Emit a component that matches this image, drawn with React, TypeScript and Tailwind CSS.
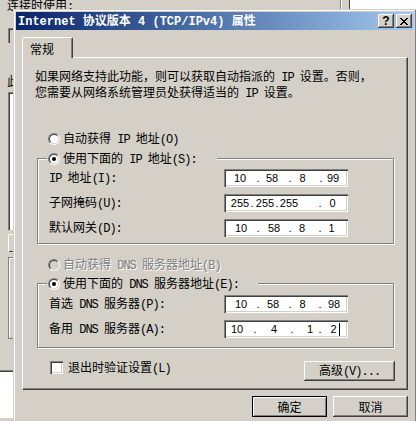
import React from "react";

const LATIN = "font-['Liberation_Mono',monospace] tracking-[-1px]";
const LATIN_BOLD = "font-['Liberation_Mono',monospace]";
const CJK = "font-['Noto_Sans_CJK_SC',sans-serif]";

function isWide(ch: string) {
  const c = ch.codePointAt(0) ?? 0;
  return c >= 0x2e80;
}

function T({ s, latin = LATIN }: { s: string; latin?: string }) {
  const runs: { w: boolean; t: string }[] = [];
  for (const ch of s) {
    const w = isWide(ch);
    const last = runs[runs.length - 1];
    if (last && last.w === w) last.t += ch;
    else runs.push({ w, t: ch });
  }
  return (
    <span className="whitespace-pre">
      {runs.map((r, i) => (
        <span key={i} className={r.w ? CJK : latin}>
          {r.t}
        </span>
      ))}
    </span>
  );
}

type Seg = [number, string];

const IP_ROWS: { label: string; segs: Seg[]; cursor?: number }[] = [
  { label: "IP 地址(I):", segs: [[240, "10"], [258, "."], [272, "58"], [290, "."], [302.5, "8"], [321, "."], [333, "99"]] },
  { label: "子网掩码(U):", segs: [[240, "255"], [252, "."], [265, "255"], [277, "."], [289, "255"], [320, "."], [332.5, "0"]] },
  { label: "默认网关(D):", segs: [[241, "10"], [258, "."], [274, "58"], [290, "."], [302, "8"], [320, "."], [331.5, "1"]] },
];

const DNS_ROWS: { label: string; segs: Seg[]; cursor?: number }[] = [
  { label: "首选 DNS 服务器(P):", segs: [[241, "10"], [258, "."], [273, "58"], [290, "."], [302.5, "8"], [320, "."], [334, "98"]] },
  { label: "备用 DNS 服务器(A):", segs: [[237, "10"], [255, "."], [274, "4"], [292, "."], [310, "1"], [320, "."], [333.5, "2"]], cursor: 338 },
];

function IpBox({ segs, cursor }: { segs: Seg[]; cursor?: number }) {
  let prev = 224;
  const items = segs.map(([c, t], i) => {
    const ml = c - prev;
    prev = c;
    return (
      <span key={i} className="flex w-0 justify-center" style={{ marginLeft: ml }}>
        {t}
      </span>
    );
  });
  return (
    <div className="flex h-[18px] w-[124px] items-center bg-white font-['Liberation_Sans',sans-serif] text-[11px] leading-[13px] text-black shadow-[inset_1px_1px_0_#808080,inset_2px_2px_0_#404040,inset_-1px_-1px_0_#fff,inset_-2px_-2px_0_#d4d0c8]">
      {items}
      {cursor !== undefined && (
        <span className="h-[13px] w-px shrink-0 bg-black" style={{ marginLeft: cursor - prev + 1 }} />
      )}
    </div>
  );
}

function Radio({ checked, disabled }: { checked?: boolean; disabled?: boolean }) {
  return (
    <span className="flex h-[12px] w-[12px] shrink-0 items-center justify-center rounded-full border border-t-[#808080] border-l-[#808080] border-r-white border-b-white">
      <span
        className={
          disabled
            ? "flex h-[10px] w-[10px] items-center justify-center rounded-full border border-t-[#404040] border-l-[#404040] border-r-[#d4d0c8] border-b-[#d4d0c8] bg-[#d4d0c8]"
            : "flex h-[10px] w-[10px] items-center justify-center rounded-full border border-t-[#404040] border-l-[#404040] border-r-[#d4d0c8] border-b-[#d4d0c8] bg-white"
        }
      >
        {checked && <span className="h-[4px] w-[4px] rounded-full bg-black" />}
      </span>
    </span>
  );
}

function CapBtn({ children, extra }: { children: React.ReactNode; extra?: boolean }) {
  return (
    <div
      className={
        extra
          ? "ml-[2px] flex h-[14px] w-[16px] items-center justify-center bg-[#d4d0c8] shadow-[inset_-1px_-1px_0_#404040,inset_1px_1px_0_#fff,inset_-2px_-2px_0_#808080]"
          : "flex h-[14px] w-[16px] items-center justify-center bg-[#d4d0c8] shadow-[inset_-1px_-1px_0_#404040,inset_1px_1px_0_#fff,inset_-2px_-2px_0_#808080]"
      }
    >
      {children}
    </div>
  );
}

const BTN =
  "flex items-center justify-center bg-[#d4d0c8] shadow-[inset_-1px_-1px_0_#404040,inset_1px_1px_0_#fff,inset_-2px_-2px_0_#808080]";

function Row({ label, segs, cursor }: { label: string; segs: Seg[]; cursor?: number }) {
  return (
    <div className="ml-[1px] flex h-[18px] items-center">
      <div className="w-[175px] whitespace-nowrap">
        <T s={label} />
      </div>
      <IpBox segs={segs} cursor={cursor} />
    </div>
  );
}

function Background() {
  return (
    <div className="flex h-full w-full">
      <div className="flex w-[340px] flex-col">
        <div className="-mt-[2px] ml-[7px] h-[13px] whitespace-nowrap">
          <T s="连接时使用:" />
        </div>
        <div className="ml-[8px] mt-[17px] h-[15px] w-[300px] shadow-[inset_1px_1px_0_#808080,inset_2px_2px_0_#404040]" />
        <div className="ml-[7px] mt-[31px] h-[13px] whitespace-nowrap">
          <T s="此连接使用下列项目(O):" />
        </div>
        <div className="ml-[8px] mt-[5px] h-[138px] w-[300px] bg-white shadow-[inset_1px_1px_0_#808080,inset_2px_2px_0_#404040]" />
        <div className="ml-[8px] mt-[4px] h-[18px] w-[80px] shadow-[inset_1px_1px_0_#fff,inset_-1px_-1px_0_#404040]" />
        <div className="ml-[8px] mt-[5px] h-[82px] w-[300px] border border-[#808080] shadow-[inset_1px_1px_0_#fff]" />
        <div className="-ml-[20px] mt-[31px] h-[48px] w-[300px] bg-white shadow-[inset_1px_1px_0_#808080,inset_2px_2px_0_#404040]" />
      </div>
      <div className="w-px bg-[#808080]" />
      <div className="w-px bg-white" />
      <div className="w-[7px]" />
      <div className="w-px bg-[#404040]" />
      <div className="flex-1 bg-white" />
    </div>
  );
}

export default function App() {
  return (
    <div className="relative h-[421px] w-[416px] overflow-hidden bg-[#d4d0c8] font-['Noto_Sans_CJK_SC',sans-serif] text-[12px] leading-[13px] text-black">
      <Background />

      <div className="absolute left-[13px] top-[9px] h-[430px] w-[404px] bg-[#d4d0c8] p-[3px] shadow-[inset_-1px_-1px_0_#404040,inset_1px_1px_0_#d4d0c8,inset_-2px_-2px_0_#808080,inset_2px_2px_0_#fff]">
        {/* Title bar */}
        <div className="flex h-[18px] items-center bg-linear-to-r from-[#0a246a] to-[#a6caf0] pl-[2px] pr-[2px]">
          <div className="flex-1 whitespace-nowrap text-[12px] font-bold leading-[13px] text-white">
            <T s="Internet 协议版本 4 (TCP/IPv4) 属性" latin={LATIN_BOLD} />
          </div>
          <CapBtn>
            <span className="font-['Liberation_Sans',sans-serif] text-[12px] font-bold leading-[12px] text-black">?</span>
          </CapBtn>
          <CapBtn extra>
            <svg width="8" height="7" viewBox="0 0 8 7" shapeRendering="crispEdges">
              <path
                fill="#000"
                d="M0 0h2v1H0zM6 0h2v1H6zM1 1h2v1H1zM5 1h2v1H5zM2 2h4v1H2zM3 3h2v1H3zM2 4h4v1H2zM1 5h2v1H1zM5 5h2v1H5zM0 6h2v1H0zM6 6h2v1H6z"
              />
            </svg>
          </CapBtn>
        </div>

        <div className="px-[6px]">
          {/* Tab */}
          <div className="mt-[7px] flex">
            <div className="relative z-10 -mb-px flex h-[21px] w-[51px] items-center rounded-t-[2px] border-l border-t border-r border-white border-r-[#404040] bg-[#d4d0c8] pl-[7px] shadow-[inset_-1px_0_0_#808080]">
              <T s="常规" />
            </div>
          </div>

          {/* Panel */}
          <div className="flex h-[333px] flex-col border border-white border-r-[#404040] border-b-[#404040] shadow-[inset_-1px_-1px_0_#808080]">
            <div className="ml-[12px] mt-[11px] whitespace-nowrap">
              <div>
                <T s="如果网络支持此功能，则可以获取自动指派的 IP 设置。否则，" />
              </div>
              <div>
                <T s="您需要从网络系统管理员处获得适当的 IP 设置。" />
              </div>
            </div>

            <div className="ml-[25px] mt-[31px] flex h-[13px] items-center whitespace-nowrap">
              <Radio />
              <span className="ml-[3px]">
                <T s="自动获得 IP 地址(O)" />
              </span>
            </div>

            {/* Group 1 */}
            <div className="ml-[14px] mt-[13px] w-[357px] border border-[#808080] pb-[6px] pl-[10px] shadow-[1px_1px_0_#fff,inset_1px_1px_0_#fff]">
              <div className="-ml-[1px] -mt-[7px] flex h-[13px] w-[170px] items-center whitespace-nowrap bg-[#d4d0c8] pl-[1px]">
                <Radio checked />
                <span className="ml-[3px]">
                  <T s="使用下面的 IP 地址(S):" />
                </span>
              </div>
              <div className="mt-[4px] flex flex-col gap-[7px]">
                {IP_ROWS.map((r) => (
                  <Row key={r.label} label={r.label} segs={r.segs} cursor={r.cursor} />
                ))}
              </div>
            </div>

            <div className="ml-[25px] mt-[14px] flex h-[13px] items-center whitespace-nowrap">
              <Radio disabled />
              <span className="ml-[3px] text-[#808080] [text-shadow:1px_1px_0_#fff]">
                <T s="自动获得 DNS 服务器地址(B)" />
              </span>
            </div>

            {/* Group 2 */}
            <div className="ml-[14px] mt-[12px] w-[357px] border border-[#808080] pb-[9px] pl-[10px] shadow-[1px_1px_0_#fff,inset_1px_1px_0_#fff]">
              <div className="-ml-[1px] -mt-[7px] flex h-[13px] w-[211px] items-center whitespace-nowrap bg-[#d4d0c8] pl-[1px]">
                <Radio checked />
                <span className="ml-[3px]">
                  <T s="使用下面的 DNS 服务器地址(E):" />
                </span>
              </div>
              <div className="mt-[5px] flex flex-col gap-[7px]">
                {DNS_ROWS.map((r) => (
                  <Row key={r.label} label={r.label} segs={r.segs} cursor={r.cursor} />
                ))}
              </div>
            </div>

            {/* Checkbox + advanced */}
            <div className="mt-[13px] flex items-start">
              <div className="ml-[27px] flex h-[13px] items-center whitespace-nowrap">
                <span className="h-[13px] w-[13px] shrink-0 bg-white shadow-[inset_1px_1px_0_#808080,inset_2px_2px_0_#404040,inset_-1px_-1px_0_#fff,inset_-2px_-2px_0_#d4d0c8]" />
                <span className="ml-[5px]">
                  <T s="退出时验证设置(L)" />
                </span>
              </div>
              <div className={`ml-auto mr-[12px] h-[20px] w-[91px] whitespace-nowrap ${BTN}`}>
                <T s="高级(V)..." />
              </div>
            </div>
          </div>

          {/* Footer buttons */}
          <div className="mt-[6px] flex justify-end gap-[6px]">
            <div className="flex h-[21px] w-[75px] items-center justify-center border border-black bg-[#d4d0c8] shadow-[inset_1px_1px_0_#fff,inset_-1px_-1px_0_#808080]">
              <T s="确定" />
            </div>
            <div className={`h-[21px] w-[75px] ${BTN}`}>
              <T s="取消" />
            </div>
          </div>
        </div>
      </div>
    </div>
  );
}
